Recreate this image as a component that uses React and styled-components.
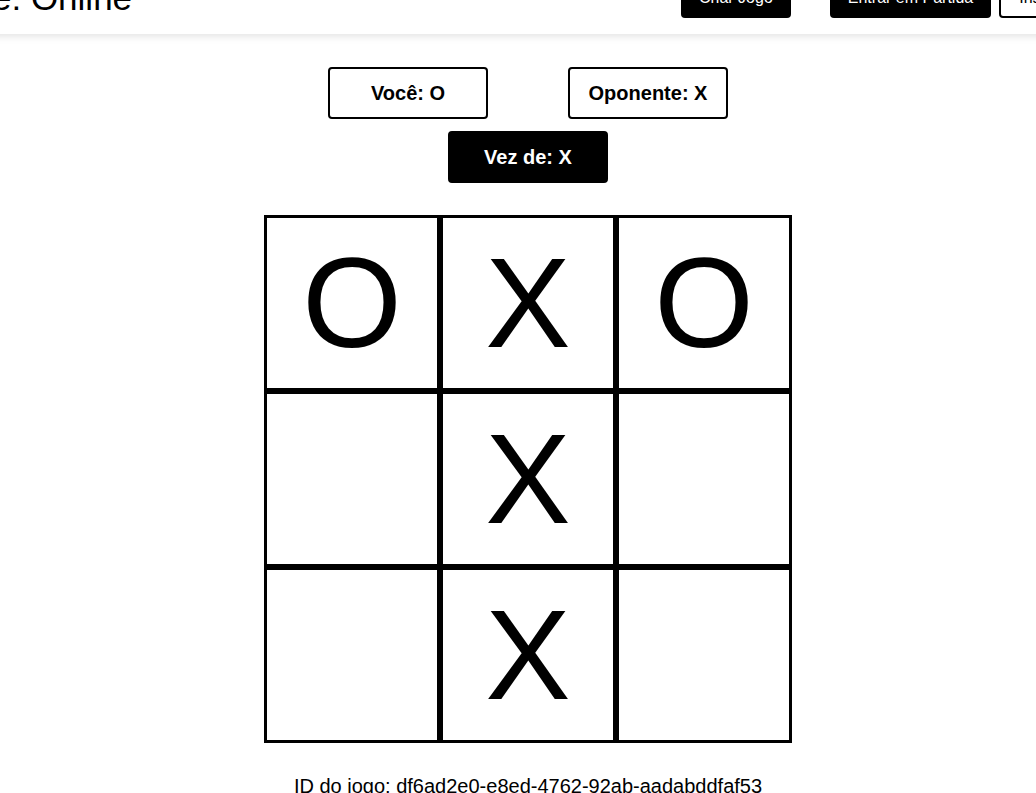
import React from 'react'
import styled, { createGlobalStyle } from 'styled-components'

const GlobalStyle = createGlobalStyle`
  * {
    box-sizing: border-box;
  }
  body {
    margin: 0;
    background: #fff;
    font-family: "Liberation Sans", Arial, sans-serif;
    color: #000;
  }
`

const Page = styled.div`
  width: 1036px;
  height: 793px;
  overflow: hidden;
  background: #fff;
`

const Header = styled.header`
  display: flex;
  align-items: center;
  width: 1316px;
  height: 72px;
  margin: -38px 0 0 -183px;
  padding: 0 20px;
  background: #fff;
  box-shadow: 0 2px 8px rgba(0, 0, 0, 0.12);
  position: relative;
  z-index: 1;
`

const Title = styled.h1`
  margin: 0;
  font-size: 35px;
  font-weight: 400;
  white-space: nowrap;
`

const Nav = styled.nav`
  display: flex;
  align-items: center;
  gap: 8px;
  margin-left: auto;
`

const NavButton = styled.button`
  height: 40px;
  padding: 0 18px;
  border: ${({ $outline }) => ($outline ? '2px solid #000' : '0')};
  border-radius: 4px;
  background: ${({ $outline }) => ($outline ? '#fff' : '#000')};
  color: ${({ $outline }) => ($outline ? '#000' : '#fff')};
  font-family: inherit;
  font-size: 16px;
  white-space: nowrap;
  cursor: pointer;
  &:first-child {
    margin-right: 31px;
  }
`

const Main = styled.main`
  display: flex;
  flex-direction: column;
  align-items: center;
  padding: 33px 0 0 20px;
`

const Players = styled.div`
  display: flex;
  gap: 80px;
  margin-bottom: 12px;
`

const Badge = styled.div`
  width: 160px;
  padding: 12px 0;
  border: 2px solid #000;
  border-radius: 4px;
  background: ${({ $filled }) => ($filled ? '#000' : '#fff')};
  color: ${({ $filled }) => ($filled ? '#fff' : '#000')};
  font-size: 20px;
  font-weight: 700;
  line-height: 24px;
  text-align: center;
`

const Board = styled.div`
  display: grid;
  grid-template-columns: repeat(3, 176px);
  grid-template-rows: repeat(3, 176px);
  margin-top: 32px;
`

const Cell = styled.div`
  display: flex;
  align-items: center;
  justify-content: center;
  border: 3px solid #000;
  font-size: 128px;
  line-height: 1;
  cursor: pointer;
`

const GameId = styled.p`
  margin: 32px 0 0;
  font-size: 20px;
`

const board = ['O', 'X', 'O', '', 'X', '', '', 'X', '']

const App = () => {
  return (
    <Page>
      <GlobalStyle />
      <Header>
        <Title>Tic Tac Toe: Online</Title>
        <Nav>
          <NavButton>Criar Jogo</NavButton>
          <NavButton>Entrar em Partida</NavButton>
          <NavButton $outline>Instruções</NavButton>
        </Nav>
      </Header>

      <Main>
        <Players>
          <Badge>Você: O</Badge>
          <Badge>Oponente: X</Badge>
        </Players>
        <Badge $filled>Vez de: X</Badge>

        <Board>
          {board.map((value, i) => (
            <Cell key={i}>{value}</Cell>
          ))}
        </Board>

        <GameId>ID do jogo: df6ad2e0-e8ed-4762-92ab-aadabddfaf53</GameId>
      </Main>
    </Page>
  )
}

export default App
